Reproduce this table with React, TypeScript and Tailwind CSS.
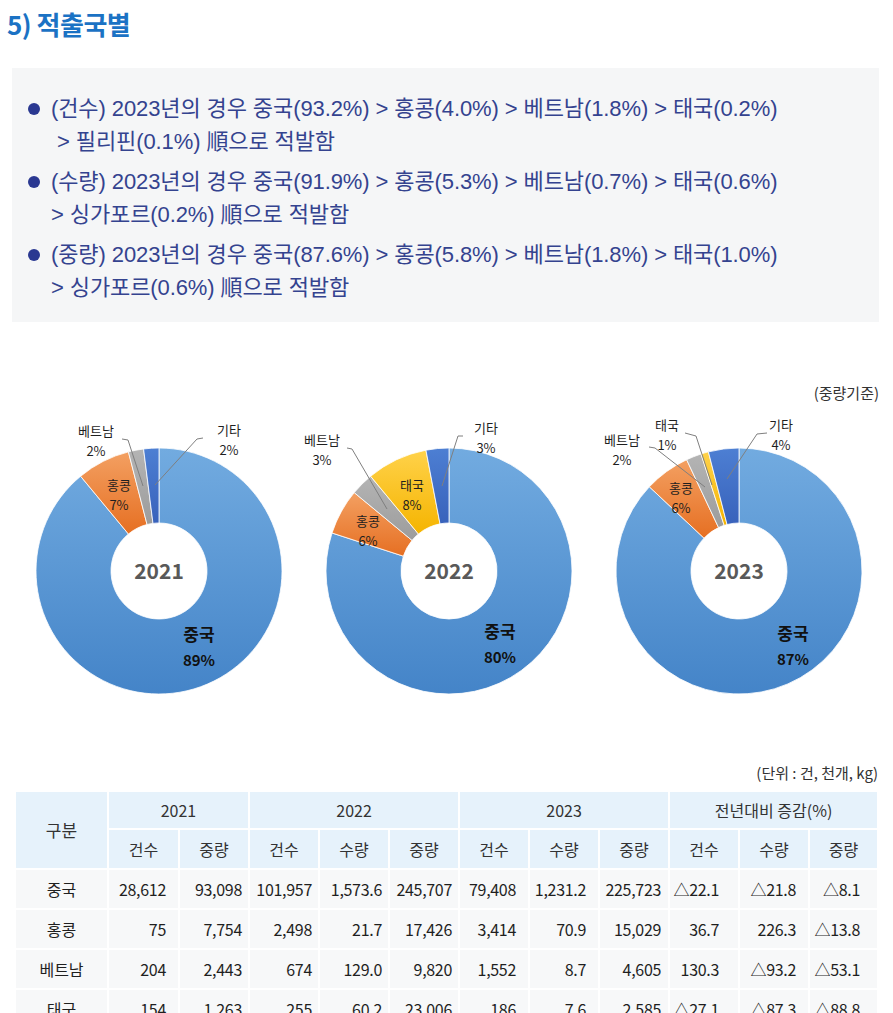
const FONT = "font-['Noto_Sans_CJK_KR','Noto_Sans',sans-serif]";

type Slice = { name: string; value: number; fill: string };
type Label = { x: number; y: number; name: string; pct: string; big?: boolean };
type Leader = { points: string };

interface ChartProps {
  year: string;
  slices: Slice[];
  labels: Label[];
  leaders: Leader[];
}

const CX = 145;
const CY = 162;
const R_OUT = 123;
const R_IN = 48;

const slicePath = (a0: number, a1: number) => {
  const p = (a: number, rad: number) =>
    `${(CX + rad * Math.sin(a)).toFixed(2)} ${(CY - rad * Math.cos(a)).toFixed(2)}`;
  const large = a1 - a0 > Math.PI ? 1 : 0;
  return [
    `M ${p(a0, R_OUT)}`,
    `A ${R_OUT} ${R_OUT} 0 ${large} 1 ${p(a1, R_OUT)}`,
    `L ${p(a1, R_IN)}`,
    `A ${R_IN} ${R_IN} 0 ${large} 0 ${p(a0, R_IN)}`,
    "Z",
  ].join(" ");
};

const Gradients = () => (
  <defs>
    <linearGradient id="g-blue" x1="0" y1="0" x2="0" y2="1">
      <stop offset="0%" stopColor="#72abe0" />
      <stop offset="100%" stopColor="#4484c8" />
    </linearGradient>
    <linearGradient id="g-orange" x1="0" y1="0" x2="0" y2="1">
      <stop offset="0%" stopColor="#f3a062" />
      <stop offset="100%" stopColor="#e66f22" />
    </linearGradient>
    <linearGradient id="g-gray" x1="0" y1="0" x2="0" y2="1">
      <stop offset="0%" stopColor="#b4b4b4" />
      <stop offset="100%" stopColor="#9c9c9c" />
    </linearGradient>
    <linearGradient id="g-yellow" x1="0" y1="0" x2="0" y2="1">
      <stop offset="0%" stopColor="#ffd24a" />
      <stop offset="100%" stopColor="#f5b400" />
    </linearGradient>
    <linearGradient id="g-navy" x1="0" y1="0" x2="0" y2="1">
      <stop offset="0%" stopColor="#4d7fd3" />
      <stop offset="100%" stopColor="#3862bb" />
    </linearGradient>
  </defs>
);

const Donut = ({ year, slices, labels, leaders }: ChartProps) => {
  const total = slices.reduce((s, x) => s + x.value, 0);
  let acc = 0;
  return (
    <svg width="290" height="300" viewBox="0 0 290 300" className={FONT}>
      <Gradients />
      {slices.map((s) => {
        const a0 = (acc / total) * Math.PI * 2;
        acc += s.value;
        const a1 = (acc / total) * Math.PI * 2;
        return (
          <path
            key={s.name}
            d={slicePath(a0, a1)}
            fill={s.fill}
            stroke="#ffffff"
            strokeWidth="0.8"
          />
        );
      })}
      {leaders.map((l, i) => (
        <polyline key={i} points={l.points} fill="none" stroke="#7f7f7f" strokeWidth="1" />
      ))}
      {labels.map((l) =>
        l.big ? (
          <g key={l.name} fill="#111111" fontWeight="700" textAnchor="middle" dominantBaseline="middle">
            <text x={l.x} y={l.y} fontSize="17">
              {l.name}
            </text>
            <text x={l.x} y={l.y + 26} fontSize="15">
              {l.pct}
            </text>
          </g>
        ) : (
          <g key={l.name} fill="#1f1f1f" textAnchor="middle" dominantBaseline="middle" fontSize="13">
            <text x={l.x} y={l.y}>
              {l.name}
            </text>
            <text x={l.x} y={l.y + 20}>
              {l.pct}
            </text>
          </g>
        )
      )}
      <text
        x={CX}
        y={CY + 2}
        textAnchor="middle"
        dominantBaseline="middle"
        fontSize="21"
        fontWeight="700"
        fill="#595959"
      >
        {year}
      </text>
    </svg>
  );
};

const charts: ChartProps[] = [
  {
    year: "2021",
    slices: [
      { name: "중국", value: 89, fill: "url(#g-blue)" },
      { name: "홍콩", value: 7, fill: "url(#g-orange)" },
      { name: "베트남", value: 2, fill: "url(#g-gray)" },
      { name: "기타", value: 2, fill: "url(#g-navy)" },
    ],
    labels: [
      { x: 82, y: 23, name: "베트남", pct: "2%" },
      { x: 215, y: 22, name: "기타", pct: "2%" },
      { x: 105, y: 77, name: "홍콩", pct: "7%" },
      { x: 185, y: 227, name: "중국", pct: "89%", big: true },
    ],
    leaders: [
      { points: "108,30 114,31 129,77" },
      { points: "189,29 183,30 141,76" },
    ],
  },
  {
    year: "2022",
    slices: [
      { name: "중국", value: 80, fill: "url(#g-blue)" },
      { name: "홍콩", value: 6, fill: "url(#g-orange)" },
      { name: "베트남", value: 3, fill: "url(#g-gray)" },
      { name: "태국", value: 8, fill: "url(#g-yellow)" },
      { name: "기타", value: 3, fill: "url(#g-navy)" },
    ],
    labels: [
      { x: 18, y: 32, name: "베트남", pct: "3%" },
      { x: 182, y: 20, name: "기타", pct: "3%" },
      { x: 108, y: 77, name: "태국", pct: "8%" },
      { x: 64, y: 113, name: "홍콩", pct: "6%" },
      { x: 196, y: 224, name: "중국", pct: "80%", big: true },
    ],
    leaders: [
      { points: "43,39 48,40 83,100" },
      { points: "159,27 154,27 138,77" },
    ],
  },
  {
    year: "2023",
    slices: [
      { name: "중국", value: 87, fill: "url(#g-blue)" },
      { name: "홍콩", value: 6, fill: "url(#g-orange)" },
      { name: "베트남", value: 2, fill: "url(#g-gray)" },
      { name: "태국", value: 1, fill: "url(#g-yellow)" },
      { name: "기타", value: 4, fill: "url(#g-navy)" },
    ],
    labels: [
      { x: 73, y: 17, name: "태국", pct: "1%" },
      { x: 28, y: 32, name: "베트남", pct: "2%" },
      { x: 187, y: 17, name: "기타", pct: "4%" },
      { x: 87, y: 80, name: "홍콩", pct: "6%" },
      { x: 199, y: 226, name: "중국", pct: "87%", big: true },
    ],
    leaders: [
      { points: "91,24 102,27 118,76" },
      { points: "55,38 61,39 111,78" },
      { points: "173,24 163,25 133,70" },
    ],
  },
];

const bullets: string[][] = [
  ["(건수) 2023년의 경우 중국(93.2%) > 홍콩(4.0%) > 베트남(1.8%) > 태국(0.2%)", "\u00a0> 필리핀(0.1%) 順으로 적발함"],
  ["(수량) 2023년의 경우 중국(91.9%) > 홍콩(5.3%) > 베트남(0.7%) > 태국(0.6%)", "> 싱가포르(0.2%) 順으로 적발함"],
  ["(중량) 2023년의 경우 중국(87.6%) > 홍콩(5.8%) > 베트남(1.8%) > 태국(1.0%)", "> 싱가포르(0.6%) 順으로 적발함"],
];

const rows: string[][] = [
  ["중국", "28,612", "93,098", "101,957", "1,573.6", "245,707", "79,408", "1,231.2", "225,723", "△22.1", "△21.8", "△8.1"],
  ["홍콩", "75", "7,754", "2,498", "21.7", "17,426", "3,414", "70.9", "15,029", "36.7", "226.3", "△13.8"],
  ["베트남", "204", "2,443", "674", "129.0", "9,820", "1,552", "8.7", "4,605", "130.3", "△93.2", "△53.1"],
  ["태국", "154", "1,263", "255", "60.2", "23,006", "186", "7.6", "2,585", "△27.1", "△87.3", "△88.8"],
];

// right padding per data column, read off the reference
const padR = [
  "pr-[12px]",
  "pr-[6px]",
  "pr-[6px]",
  "pr-[6px]",
  "pr-[6px]",
  "pr-[12px]",
  "pr-[12px]",
  "pr-[7px]",
  "pr-[19px]",
  "pr-[12px]",
  "pr-[17px]",
];

const colWidths = ["w-[93px]", "w-[71px]", "w-[70px]", "w-[70px]", "w-[70px]", "w-[70px]", "w-[70px]", "w-[70px]", "w-[70px]", "w-[70px]", "w-[70px]", "w-[69px]"];

const App = () => {
  return (
    <div className={`w-[893px] bg-white ${FONT}`}>
      <h1 className="pl-[7px] pt-[8px] text-[26px] leading-[32px] font-bold text-[#1b72c4] tracking-[-0.5px]">
        5) 적출국별
      </h1>

      <div className="mt-[28px] ml-[12px] mr-[14px] bg-[#f5f6f7] pl-[16px] pt-[24px] pb-[18px] flex flex-col gap-[7px]">
        {bullets.map((b, i) => (
          <div key={i} className="flex items-start gap-[11px]">
            <span className="mt-[11px] w-[12px] h-[12px] rounded-full bg-[#2a3891] shrink-0" />
            <p className="font-['Liberation_Sans','Noto_Sans_CJK_KR',sans-serif] text-[22px] leading-[33px] text-[#34438f] tracking-[-0.1px] whitespace-nowrap">
              {b[0]}
              <br />
              {b[1]}
            </p>
          </div>
        ))}
      </div>

      <div className="mt-[61px] pr-[14px] text-right text-[15px] leading-[20px] text-[#333333]">(중량기준)</div>
      <div className="mt-[6px] ml-[14px] flex">
        {charts.map((c) => (
          <Donut key={c.year} {...c} />
        ))}
      </div>

      <div className="mt-[54px] pr-[15px] text-right text-[15px] leading-[20px] text-[#333333]">
        (단위 : 건, 천개, kg)
      </div>
      <table className="mt-[7px] ml-[14px] w-[863px] table-fixed border-collapse text-[16px] text-[#1f1f1f]">
        <colgroup>
          {colWidths.map((w, i) => (
            <col key={i} className={w} />
          ))}
        </colgroup>
        <thead className="text-[#333333]">
          <tr className="h-[38px] bg-[#e6f2fb]">
            <th rowSpan={2} className="border-2 border-white font-normal text-[17px]">
              구분
            </th>
            <th colSpan={2} className="border-2 border-white font-normal">
              2021
            </th>
            <th colSpan={3} className="border-2 border-white font-normal">
              2022
            </th>
            <th colSpan={3} className="border-2 border-white font-normal">
              2023
            </th>
            <th colSpan={3} className="border-2 border-white font-normal">
              전년대비 증감(%)
            </th>
          </tr>
          <tr className="h-[40px] bg-[#e6f2fb]">
            {["건수", "중량", "건수", "수량", "중량", "건수", "수량", "중량", "건수", "수량", "중량"].map((h, i) => (
              <th key={i} className="border-2 border-white font-normal">
                {h}
              </th>
            ))}
          </tr>
        </thead>
        <tbody>
          {rows.map((r) => (
            <tr key={r[0]} className="h-[40px] bg-[#f7f8f9]">
              <td className="border-2 border-white text-center">{r[0]}</td>
              {r.slice(1).map((v, i) => (
                <td key={i} className={`border-2 border-white text-right whitespace-nowrap tracking-[-0.3px] ${padR[i]}`}>
                  {v}
                </td>
              ))}
            </tr>
          ))}
        </tbody>
      </table>
    </div>
  );
};

export default App;
